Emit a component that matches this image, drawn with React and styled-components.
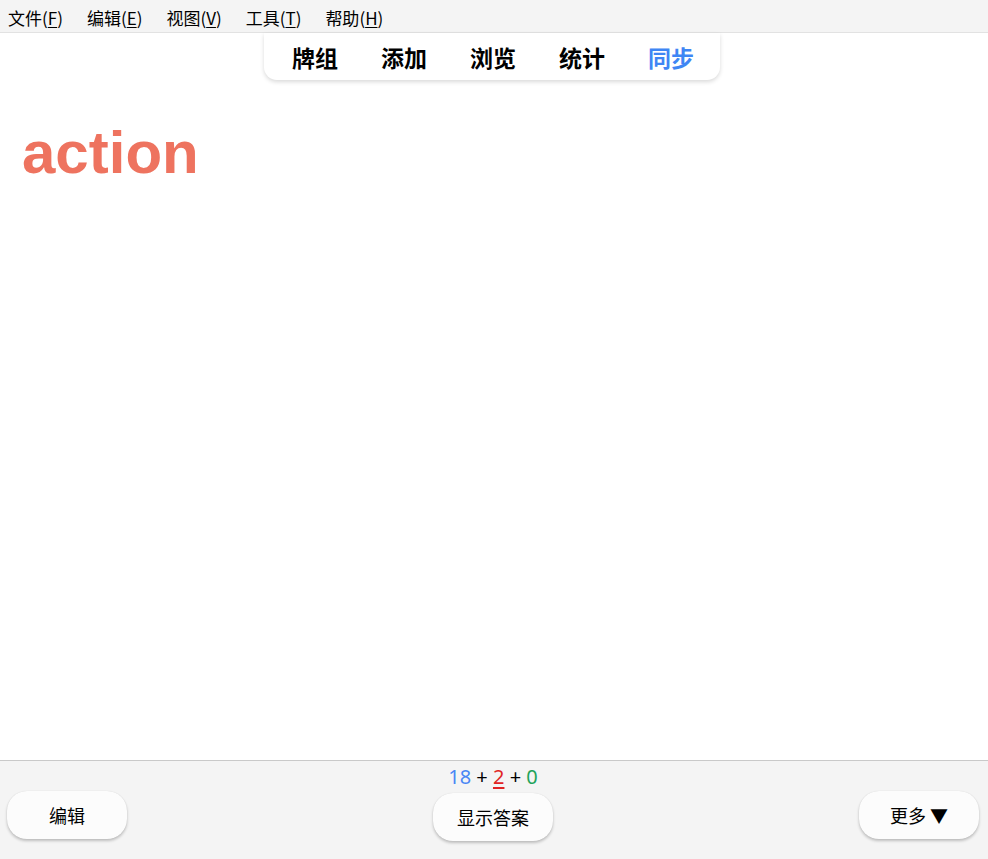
import React from "react";
import styled, { createGlobalStyle } from "styled-components";

const Global = createGlobalStyle`
  html, body { margin: 0; padding: 0; height: 100%; }
  body { font-family: "Noto Sans CJK SC", "Noto Sans", sans-serif; background: #fff; }
  #root { height: 100%; }
`;

const Page = styled.div`
  height: 859px;
  display: flex;
  flex-direction: column;
  overflow: hidden;
`;

const MenuBar = styled.div`
  height: 33px;
  background: #f4f4f4;
  border-bottom: 1px solid #e2e2e2;
  display: flex;
  align-items: center;
  gap: 24px;
  padding: 3px 0 0 8px;
  box-sizing: border-box;
`;

const MenuItem = styled.div`
  font-family: "Noto Sans CJK SC", sans-serif;
  font-size: 17px;
  color: #000;
  line-height: 24px;
  u { text-decoration: underline; text-underline-offset: 2px; }
`;

const Main = styled.div`
  flex: 1;
  display: flex;
  flex-direction: column;
  background: #fff;
`;

const TopBar = styled.div`
  align-self: center;
  margin-left: -4px;
  width: 456px;
  height: 47px;
  box-sizing: border-box;
  padding: 0 26px 0 28px;
  display: flex;
  align-items: center;
  justify-content: space-between;
  background: #fff;
  border-radius: 0 0 13px 13px;
  box-shadow: 0 2px 4px rgba(0, 0, 0, 0.15);
`;

const NavItem = styled.div`
  font-family: "Noto Sans CJK SC", sans-serif;
  font-weight: 700;
  font-size: 23px;
  line-height: 30px;
  color: ${(p) => (p.$active ? "#3f86f4" : "#000")};
`;

const Card = styled.div`
  flex: 1;
  padding: 36px 0 0 22px;
`;

const Word = styled.div`
  font-family: "Liberation Sans", Arial, sans-serif;
  font-weight: 700;
  font-size: 60px;
  line-height: 74px;
  color: #ee735f;
`;

const BottomBar = styled.div`
  height: 99px;
  box-sizing: border-box;
  border-top: 1px solid #c9c9c9;
  background: #f4f4f4;
  display: grid;
  grid-template-columns: 1fr auto 1fr;
  padding: 0 9px 0 7px;
`;

const Side = styled.div`
  display: flex;
  justify-content: ${(p) => (p.$right ? "flex-end" : "flex-start")};
  padding-top: 30px;
`;

const Center = styled.div`
  display: flex;
  flex-direction: column;
  align-items: center;
  padding-top: 4px;
`;

const Counts = styled.div`
  font-family: "Noto Sans", "Open Sans", sans-serif;
  font-size: 20px;
  line-height: 24px;
  color: #000;
  margin-bottom: 4px;
`;

const Count = styled.span`
  color: ${(p) => p.$color};
  text-decoration: ${(p) => (p.$underline ? "underline" : "none")};
  text-underline-offset: 3px;
`;

const Button = styled.button`
  width: 120px;
  height: 48px;
  border: none;
  border-radius: 20px;
  background: #fcfcfc;
  box-shadow: 0 2px 3px rgba(0, 0, 0, 0.22), 0 0 1px rgba(0, 0, 0, 0.12);
  font-family: "Noto Sans CJK SC", sans-serif;
  font-size: 18px;
  color: #000;
  padding: 0;
  cursor: pointer;
`;

export default function App() {
  const menus = [
    ["文件", "F"],
    ["编辑", "E"],
    ["视图", "V"],
    ["工具", "T"],
    ["帮助", "H"],
  ];
  const nav = ["牌组", "添加", "浏览", "统计", "同步"];
  return (
    <Page>
      <Global />
      <MenuBar>
        {menus.map(([t, k]) => (
          <MenuItem key={k}>
            {t}(<u>{k}</u>)
          </MenuItem>
        ))}
      </MenuBar>
      <Main>
        <TopBar>
          {nav.map((n) => (
            <NavItem key={n} $active={n === "同步"}>
              {n}
            </NavItem>
          ))}
        </TopBar>
        <Card>
          <Word>action</Word>
        </Card>
      </Main>
      <BottomBar>
        <Side>
          <Button>编辑</Button>
        </Side>
        <Center>
          <Counts>
            <Count $color="#4a86f4">18</Count> + <Count $color="#e02424" $underline>2</Count> +{" "}
            <Count $color="#1fa35a">0</Count>
          </Counts>
          <Button>显示答案</Button>
        </Center>
        <Side $right>
          <Button>更多 ▼</Button>
        </Side>
      </BottomBar>
    </Page>
  );
}
